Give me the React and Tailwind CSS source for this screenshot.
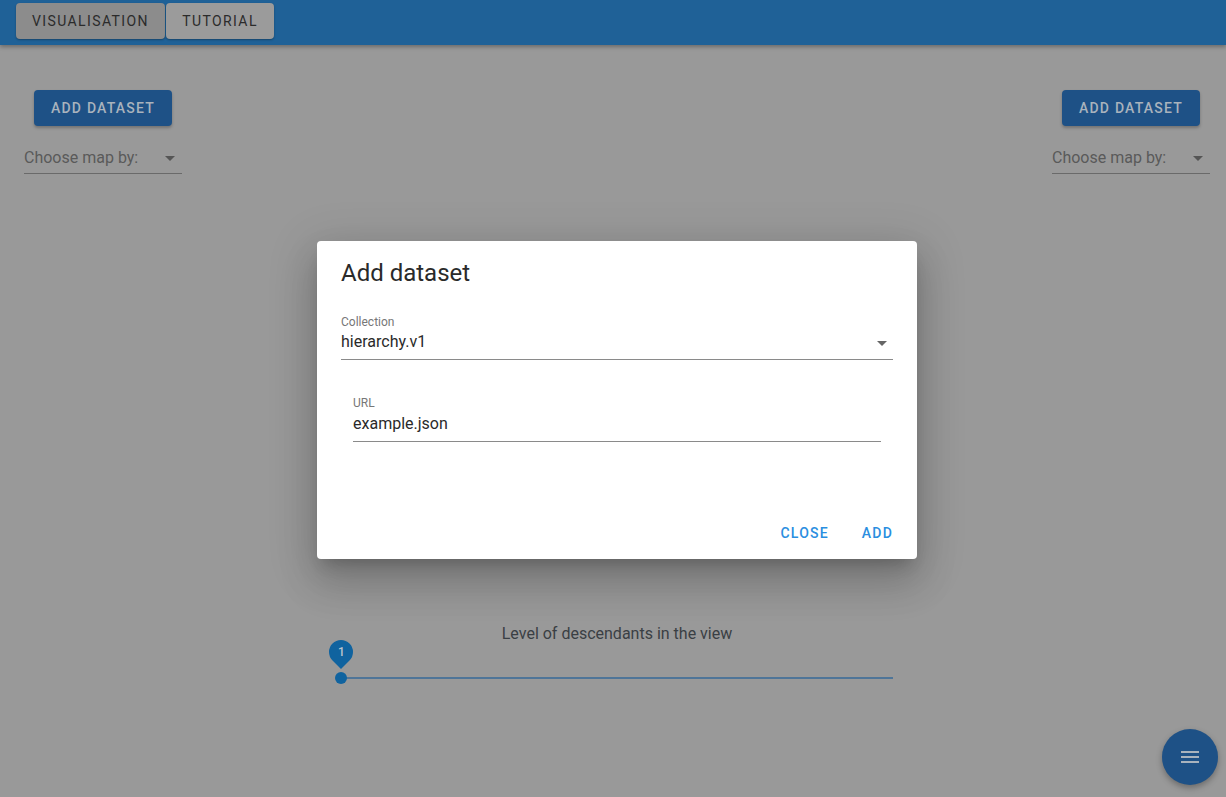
import React from "react";

const font = { fontFamily: "Roboto, 'Liberation Sans', sans-serif" };

function Caret({ color = "#555" }) {
  return (
    <svg width="10" height="5" viewBox="0 0 10 5">
      <path d="M0 0 L10 0 L5 5 Z" fill={color} />
    </svg>
  );
}

function AddBtn() {
  return (
    <button className="h-[36px] w-[138px] rounded-[4px] bg-[#1e5186] text-[#a9b3bd] text-[14px] font-medium tracking-[1.2px] shadow-[0_2px_3px_rgba(0,0,0,0.25)]">
      ADD DATASET
    </button>
  );
}

function ChooseMap() {
  return (
    <div className="w-[158px] h-[34px] border-b border-[#6a6a6a] flex items-center justify-between pr-[7px] pt-[3px]">
      <span className="text-[16px] text-[#5a5a5a]">Choose map by:</span>
      <Caret color="#555" />
    </div>
  );
}

export default function App() {
  return (
    <div className="relative w-full h-[797px] bg-[#999999] overflow-hidden" style={font}>
      <header className="h-[45px] bg-[#1f6197] shadow-[0_2px_4px_rgba(0,0,0,0.3)] flex items-start pl-[16px] pt-[3px] gap-[1px]">
        <button className="h-[36px] w-[149px] rounded-[4px] bg-[#8c8c8c] text-[#2b2b2b] text-[14px] font-normal tracking-[1.4px] shadow-[0_1px_2px_rgba(0,0,0,0.3)]">
          VISUALISATION
        </button>
        <button className="h-[36px] w-[108px] rounded-[4px] bg-[#9b9b9b] text-[#2b2b2b] text-[14px] font-normal tracking-[1.4px] shadow-[0_1px_2px_rgba(0,0,0,0.3)]">
          TUTORIAL
        </button>
      </header>

      <div className="flex justify-between pl-[24px] pr-[16px] pt-[45px]">
        <div className="flex flex-col items-start">
          <div className="ml-[10px]"><AddBtn /></div>
          <div className="mt-[14px]"><ChooseMap /></div>
        </div>
        <div className="flex flex-col items-start">
          <div className="ml-[10px]"><AddBtn /></div>
          <div className="mt-[14px]"><ChooseMap /></div>
        </div>
      </div>

      <div className="ml-[335px] w-[564px] mt-[448px] flex flex-col">
        <div className="text-center text-[16px] text-[#3a3f44]">Level of descendants in the view</div>
        <div className="relative h-[44px]">
          <div className="absolute left-[6px] right-[6px] top-[31px] h-[2px] bg-[#4f7598]" />
          <div className="absolute left-0 top-[26px] w-[12px] h-[12px] rounded-full bg-[#10639f]" />
          <div className="absolute left-[-6px] top-[-6px] w-[24px] h-[24px] rounded-[50%_50%_50%_0] rotate-[-45deg] bg-[#10639f] flex items-center justify-center">
            <span className="rotate-[45deg] text-[12px] font-medium text-[#b8c4ce]">1</span>
          </div>
        </div>
      </div>

      <button className="absolute right-[8px] bottom-[12px] w-[56px] h-[56px] rounded-full bg-[#1e5186] shadow-[0_3px_6px_rgba(0,0,0,0.3)] flex items-center justify-center">
        <svg width="20" height="14" viewBox="0 0 20 14">
          <rect x="1" y="1" width="18" height="2" fill="#a9b3bd" />
          <rect x="1" y="6" width="18" height="2" fill="#a9b3bd" />
          <rect x="1" y="11" width="18" height="2" fill="#a9b3bd" />
        </svg>
      </button>

      <div className="absolute left-[317px] top-[241px] w-[600px] h-[318px] bg-white rounded-[4px] shadow-[0_11px_15px_-7px_rgba(0,0,0,0.2),0_24px_38px_3px_rgba(0,0,0,0.14),0_9px_46px_8px_rgba(0,0,0,0.12)] flex flex-col px-[24px] pt-[17px]">
        <h2 className="text-[24px] font-normal text-[#2a2a2a] leading-[30px]">Add dataset</h2>
        <div className="mt-[27px] text-[12px] text-[#777] leading-[14px]">Collection</div>
        <div className="h-[31px] border-b border-[#8a8a8a] flex items-start justify-between pr-[6px] pt-[1px]">
          <span className="text-[16px] leading-[24px] text-[#2a2a2a]">hierarchy.v1</span>
          <span className="mt-[11px] flex"><Caret color="#666" /></span>
        </div>
        <div className="mx-[12px] mt-[36px]">
          <div className="text-[12px] text-[#777] leading-[14px]">URL</div>
          <div className="h-[32px] border-b border-[#8a8a8a] flex items-start pt-[2px]">
            <span className="text-[16px] leading-[24px] text-[#2a2a2a]">example.json</span>
          </div>
        </div>
        <div className="mt-auto mb-[15px] flex justify-end gap-[33px]">
          <button className="text-[14px] font-medium tracking-[1.2px] text-[#2a8ee0]">CLOSE</button>
          <button className="text-[14px] font-medium tracking-[1.2px] text-[#2a8ee0]">ADD</button>
        </div>
      </div>
    </div>
  );
}
